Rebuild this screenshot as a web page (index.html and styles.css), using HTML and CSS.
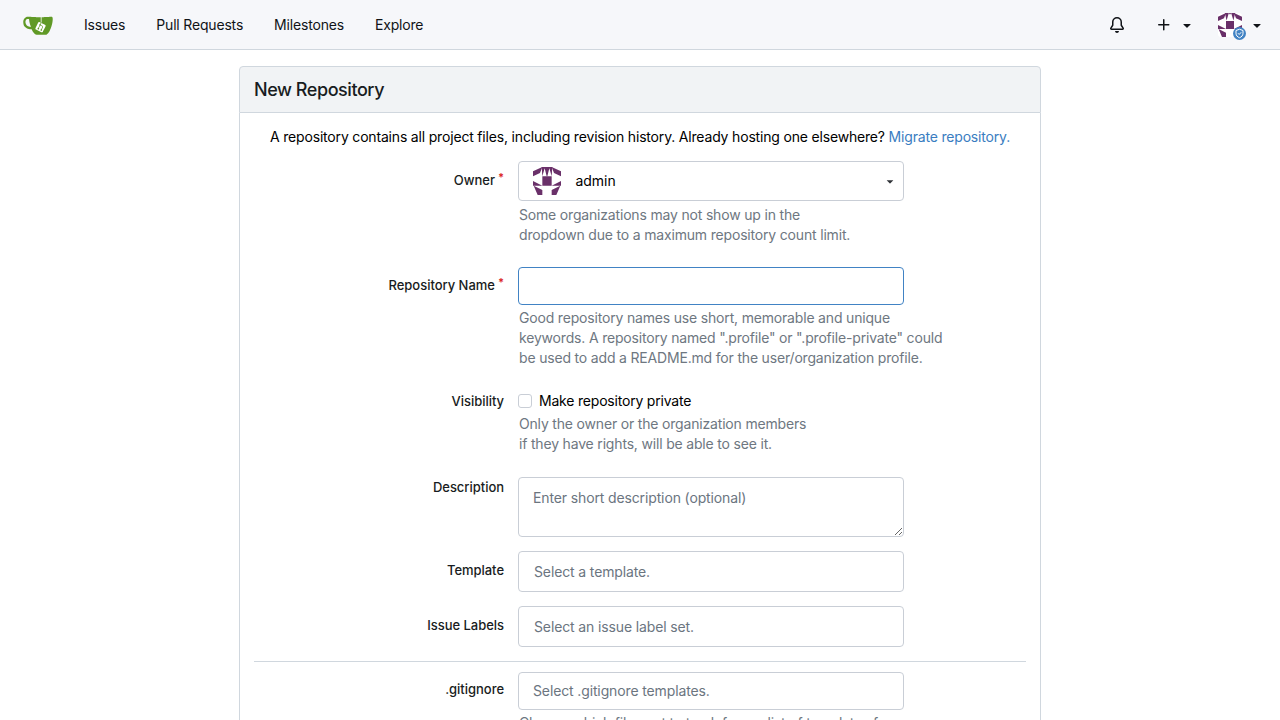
FILE: index.html
```html
<!DOCTYPE html>
<html lang="en">
<head>
    <meta charset="UTF-8">
    <meta name="viewport" content="width=device-width, initial-scale=1.0">
    <title>New Repository</title>
    <link rel="stylesheet" href="styles.css">
</head>
<body>
    <!-- shared icons -->
    <svg class="sprite" width="0" height="0">
        <symbol id="caret" viewBox="0 0 16 16">
            <path d="m4.427 7.427 3.396 3.396a.25.25 0 0 0 .354 0l3.396-3.396A.25.25 0 0 0 11.396 7H4.604a.25.25 0 0 0-.177.427"/>
        </symbol>
        <symbol id="identicon" viewBox="0 0 84 84">
            <rect width="84" height="84" fill="#fff"/>
            <g fill="#6a3069">
                <path d="M0 13 28 0 21 18 0 28zM84 13 56 0l7 18 21 10z"/>
                <path d="M28 28h28v28H28z"/>
                <path d="M0 42l28 14H0zM84 42 56 56h28z"/>
                <path d="M2 56l26 13v15H14zM82 56 56 69v15h14z"/>
            </g>
        </symbol>
    </svg>

    <nav class="navbar">
        <div class="nav-left">
            <a class="logo" href="#">
                <svg width="30" height="30" viewBox="0 0 640 640">
                    <path fill="#fff" d="m395.9 484.2-126.9-61c-12.5-6-17.9-21.2-11.8-33.8l61-126.9c6-12.5 21.2-17.9 33.8-11.8 17.2 8.3 27.1 13 27.1 13l-.1-109.2 16.7-.1.1 117.1s57.4 24.2 83.1 40.1c3.7 2.3 10.2 6.8 12.9 14.4 2.1 6.1 2 13.1-1 19.3l-61 126.9c-6.2 12.7-21.4 18.1-33.9 12"/>
                    <path fill="#609926" d="M622.7 149.8c-4.1-4.1-9.6-4-9.6-4s-117.2 6.6-177.9 8c-13.3.3-26.5.6-39.6.7v117.2c-5.5-2.6-11.1-5.3-16.6-7.9 0-36.4-.1-109.2-.1-109.2-29 .4-89.2-2.2-89.2-2.2s-141.4-7.1-156.8-8.5c-9.8-.6-22.5-2.1-39 1.5-8.7 1.8-33.5 7.4-53.8 26.9C-4.9 212.4 6.6 276.2 8 285.8c1.7 11.7 6.9 44.2 31.7 72.5 45.8 56.1 144.4 54.8 144.4 54.8s12.1 28.9 30.6 55.5c25 33.1 50.7 58.9 75.7 62 63 0 188.9-.1 188.9-.1s12 .1 28.3-10.3c14-8.5 26.5-23.4 26.5-23.4S547 483 565 451.5c5.5-9.7 10.1-19.1 14.1-28 0 0 55.2-117.1 55.2-231.1-1.1-34.5-9.6-40.6-11.6-42.6M125.6 353.9c-25.9-8.5-36.9-18.7-36.9-18.7S69.6 321.8 60 295.4c-16.5-44.2-1.4-71.2-1.4-71.2s8.4-22.5 38.5-30c13.8-3.7 31-3.1 31-3.1s7.1 59.4 15.7 94.2c7.2 29.2 24.8 77.7 24.8 77.7s-26.1-3.1-43-9.1m300.3 107.6s-6.1 14.5-19.6 15.4c-5.8.4-10.3-1.2-10.3-1.2s-.3-.1-5.3-2.1l-112.9-55s-10.9-5.7-12.8-15.6c-2.2-8.1 2.7-18.1 2.7-18.1L322 273s4.8-9.7 12.2-13c.6-.3 2.3-1 4.5-1.5 8.1-2.1 18 2.8 18 2.8l110.7 53.7s12.6 5.7 15.3 16.2c1.9 7.4-.5 14-1.8 17.2-6.3 15.4-55 113.1-55 113.1z"/>
                    <path fill="#609926" d="M326.8 380.1c-8.2.1-15.4 5.8-17.3 13.8s2 16.3 9.1 20c7.7 4 17.5 1.8 22.7-5.4 5.1-7.1 4.3-16.9-1.8-23.1l24-49.1c1.5.1 3.7.2 6.2-.5 4.1-.9 7.1-3.6 7.1-3.6 4.2 1.8 8.6 3.8 13.2 6.1 4.8 2.4 9.3 4.9 13.4 7.3.9.5 1.8 1.1 2.8 1.9 1.6 1.3 3.4 3.1 4.7 5.5 1.9 5.5-1.9 14.9-1.9 14.9-2.3 7.6-18.4 40.6-18.4 40.6-8.1-.2-15.3 5-17.7 12.5-2.6 8.1 1.1 17.3 8.9 21.3s17.4 1.7 22.5-5.3c5-6.8 4.6-16.3-1.1-22.6 1.9-3.7 3.7-7.4 5.6-11.3 5-10.4 13.5-30.4 13.5-30.4.9-1.7 5.7-10.3 2.7-21.3-2.5-11.4-12.6-16.7-12.6-16.7-12.2-7.9-29.2-15.2-29.2-15.2s0-4.1-1.1-7.1c-1.1-3.1-2.8-5.1-3.9-6.3 4.7-9.7 9.4-19.3 14.1-29-4.1-2-8.1-4-12.2-6.1-4.8 9.8-9.7 19.7-14.5 29.5-6.7-.1-12.9 3.5-16.1 9.4-3.4 6.3-2.7 14.1 1.9 19.8z"/>
                </svg>
            </a>
            <a class="item" href="#">Issues</a>
            <a class="item" href="#">Pull Requests</a>
            <a class="item" href="#">Milestones</a>
            <a class="item" href="#">Explore</a>
        </div>
        <div class="nav-right">
            <a class="bell" href="#">
                <svg width="16" height="16" viewBox="0 0 16 16"><path d="M8 16a2 2 0 0 0 1.985-1.75c.017-.137-.097-.25-.235-.25h-3.5c-.138 0-.252.113-.235.25A2 2 0 0 0 8 16M3 5a5 5 0 0 1 10 0v2.947q0 .076.042.139l1.703 2.555A1.519 1.519 0 0 1 13.482 13H2.518a1.516 1.516 0 0 1-1.263-2.36l1.703-2.554A.26.26 0 0 0 3 7.947Zm5-3.5A3.5 3.5 0 0 0 4.5 5v2.947c0 .346-.102.683-.294.97l-1.703 2.556a.017.017 0 0 0-.003.01l.001.006q0 .003.004.006l.006.004.007.001h10.964l.007-.001.006-.004.004-.006.001-.007a.02.02 0 0 0-.003-.01l-1.703-2.554a1.75 1.75 0 0 1-.294-.97V5A3.5 3.5 0 0 0 8 1.5"/></svg>
            </a>
            <a class="create" href="#">
                <svg width="16" height="16" viewBox="0 0 16 16"><path d="M7.75 2a.75.75 0 0 1 .75.75V7h4.25a.75.75 0 0 1 0 1.5H8.5v4.25a.75.75 0 0 1-1.5 0V8.5H2.75a.75.75 0 0 1 0-1.5H7V2.75A.75.75 0 0 1 7.75 2"/></svg>
                <svg width="16" height="16"><use href="#caret"/></svg>
            </a>
            <a class="user" href="#">
                <span class="avatar">
                    <svg class="avatar-img" width="24" height="24" viewBox="0 0 84 84">
                        <use href="#identicon"/>
                        <path fill="#6a3069" d="M24 0h14l-8 26zM60 0H46l8 26zM38 0h8l-4 6z"/>
                    </svg>
                    <svg class="badge" width="13" height="13" viewBox="0 0 26 26">
                        <circle cx="13" cy="13" r="13" fill="#4183c4"/>
                        <path d="M13 4.5l7 2.500v5.500c0 4.500-3 7.500-7 9-4-1.500-7-4.500-7-9V7z" fill="none" stroke="#fff" stroke-width="2"/>
                        <path d="M10 12.500l2.400 2.400 4-4.400" fill="none" stroke="#fff" stroke-width="2"/>
                    </svg>
                </span>
                <svg width="16" height="16"><use href="#caret"/></svg>
            </a>
        </div>
    </nav>

    <main class="container">
        <h3 class="card-header">New Repository</h3>
        <form class="card-body">
            <p class="intro">A repository contains all project files, including revision history. Already hosting one elsewhere? <a href="#">Migrate repository.</a></p>

            <div class="field owner">
                <label class="required">Owner</label>
                <div class="control">
                    <div class="dropdown selection">
                        <svg class="avatar-img" width="28" height="28" viewBox="0 0 84 84">
                            <use href="#identicon"/>
                            <path fill="#6a3069" d="M26 0h32l-2 28-7-24-6 24h-2L35 4l-7 24z"/>
                        </svg>
                        <span class="name">admin</span>
                        <svg class="arrow" width="14" height="14"><use href="#caret"/></svg>
                    </div>
                    <span class="help">Some organizations may not show up in the<br>dropdown due to a maximum repository count limit.</span>
                </div>
            </div>

            <div class="field repo-name">
                <label class="required" for="repo_name">Repository Name</label>
                <div class="control">
                    <input class="input focused" id="repo_name" type="text">
                    <span class="help">Good repository names use short, memorable and unique<br>keywords. A repository named ".profile" or ".profile-private" could<br>be used to add a README.md for the user/organization profile.</span>
                </div>
            </div>

            <div class="field visibility">
                <label>Visibility</label>
                <div class="control">
                    <div class="checkbox"><span class="box"></span>Make repository private</div>
                    <span class="help">Only the owner or the organization members<br>if they have rights, will be able to see it.</span>
                </div>
            </div>

            <div class="field description">
                <label for="description">Description</label>
                <div class="control">
                    <textarea class="input" id="description" placeholder="Enter short description (optional)"></textarea>
                </div>
            </div>

            <div class="field template">
                <label>Template</label>
                <div class="control">
                    <div class="dropdown search">Select a template.</div>
                </div>
            </div>

            <div class="field labels">
                <label>Issue Labels</label>
                <div class="control">
                    <div class="dropdown search">Select an issue label set.</div>
                </div>
            </div>

            <hr class="divider">

            <div class="field gitignore">
                <label>.gitignore</label>
                <div class="control">
                    <div class="dropdown multiple">Select .gitignore templates.</div>
                    <span class="help">Choose which files not to track from a list of templates for<br>common languages.</span>
                </div>
            </div>
        </form>
    </main>
</body>
</html>
```
FILE: styles.css
```css
* {
    box-sizing: border-box;
}

body {
    margin: 0;
    height: 720px;
    overflow: hidden;
    font-family: Inter, "Liberation Sans", sans-serif;
    font-size: 14px;
    line-height: 20px;
    letter-spacing: -0.18px;
    color: #000;
    background-color: #fff;
}

a {
    color: #3a7dc1;
    text-decoration: none;
}

svg {
    display: block;
    flex-shrink: 0;
    fill: currentColor;
}

.sprite {
    position: absolute;
}

/* navbar */
.navbar {
    display: flex;
    justify-content: space-between;
    height: 50px;
    padding: 0 15px 0 23px;
    background-color: #f6f7fa;
    border-bottom: 1px solid #d0d7de;
}

.nav-left,
.nav-right,
.nav-right a {
    display: flex;
    align-items: center;
}

.navbar a {
    color: #101317;
}

.nav-left {
    gap: 31px;
    padding-top: 1px;
}

.nav-right {
    padding-top: 1px;
}

.create {
    gap: 7px;
    margin-left: 31px;
}

.user {
    gap: 7px;
    margin-left: 23px;
}

.avatar {
    position: relative;
}

.avatar-img {
    border-radius: 3px;
}

.badge {
    position: absolute;
    right: -4px;
    bottom: -3px;
}

/* card */
.container {
    width: 802px;
    margin: 16px auto 0;
}

.card-header {
    height: 47px;
    margin: 0;
    padding: 0 14px;
    font-size: 18px;
    font-weight: 500;
    line-height: 46px;
    letter-spacing: -0.44px;
    color: #181c21;
    background-color: #f1f3f5;
    border: 1px solid #d0d7de;
    border-radius: 4px 4px 0 0;
}

.card-body {
    height: 607px;
    padding: 14px;
    border: 1px solid #d0d7de;
    border-width: 0 1px;
}

.intro {
    margin: 0 0 14px;
    text-align: center;
}

.field {
    display: flex;
    gap: 14px;
}

.field label {
    width: 250px;
    font-size: 13px;
    font-weight: 500;
    letter-spacing: -0.03px;
    text-align: right;
    color: #181c21;
}

.required::after {
    content: "*";
    margin-left: 3px;
    font-size: 11px;
    font-weight: 700;
    line-height: 1;
    color: #db2828;
    position: relative;
    top: -4px;
}

.control {
    display: flex;
    flex-direction: column;
}

.help {
    padding-left: 1px;
    color: #6e7781;
    margin-top: 4px;
}

.dropdown,
.input {
    display: flex;
    align-items: center;
    width: 386px;
    height: 38px;
    padding: 0 14px;
    font: inherit;
    letter-spacing: -0.13px;
    color: #6b757f;
    background-color: #fff;
    border: 1px solid #c9ced6;
    border-radius: 4px;
    outline: none;
}

.input::placeholder {
    color: #6b757f;
    opacity: 1;
}

.input.focused {
    border-color: #4183c4;
}

.selection {
    height: 40px;
    padding-right: 6px;
    letter-spacing: -0.05px;
    color: #000;
}

.selection .name {
    flex: 1;
    margin-left: 14.5px;
}

.arrow {
    color: #303338;
}

.search {
    height: 41px;
    padding-left: 15px;
    padding-top: 1px;
}

textarea.input {
    display: block;
    height: 60px;
    padding: 10px 14px;
    resize: vertical;
}

.checkbox {
    display: flex;
    align-items: center;
    gap: 7px;
    letter-spacing: -0.2px;
}

.box {
    width: 14px;
    height: 14px;
    border: 1px solid #c9ced6;
    border-radius: 3px;
}

.owner label {
    padding-top: 9px;
}

.repo-name {
    margin-top: 22px;
}

.repo-name label {
    padding-top: 8px;
}

.repo-name .help {
    margin-top: 3px;
}

.visibility {
    margin-top: 23px;
}

.visibility .help {
    margin-top: 3px;
}

.description {
    margin-top: 23px;
}

.template,
.labels {
    margin-top: 14px;
}

.template label,
.labels label {
    padding-top: 9px;
}

.divider {
    height: 1px;
    margin: 14px 0 10px;
    border: 0;
    background-color: #d0d7de;
}

.gitignore label {
    padding-top: 7px;
}

.gitignore .help {
    margin-top: 3px;
}
```
